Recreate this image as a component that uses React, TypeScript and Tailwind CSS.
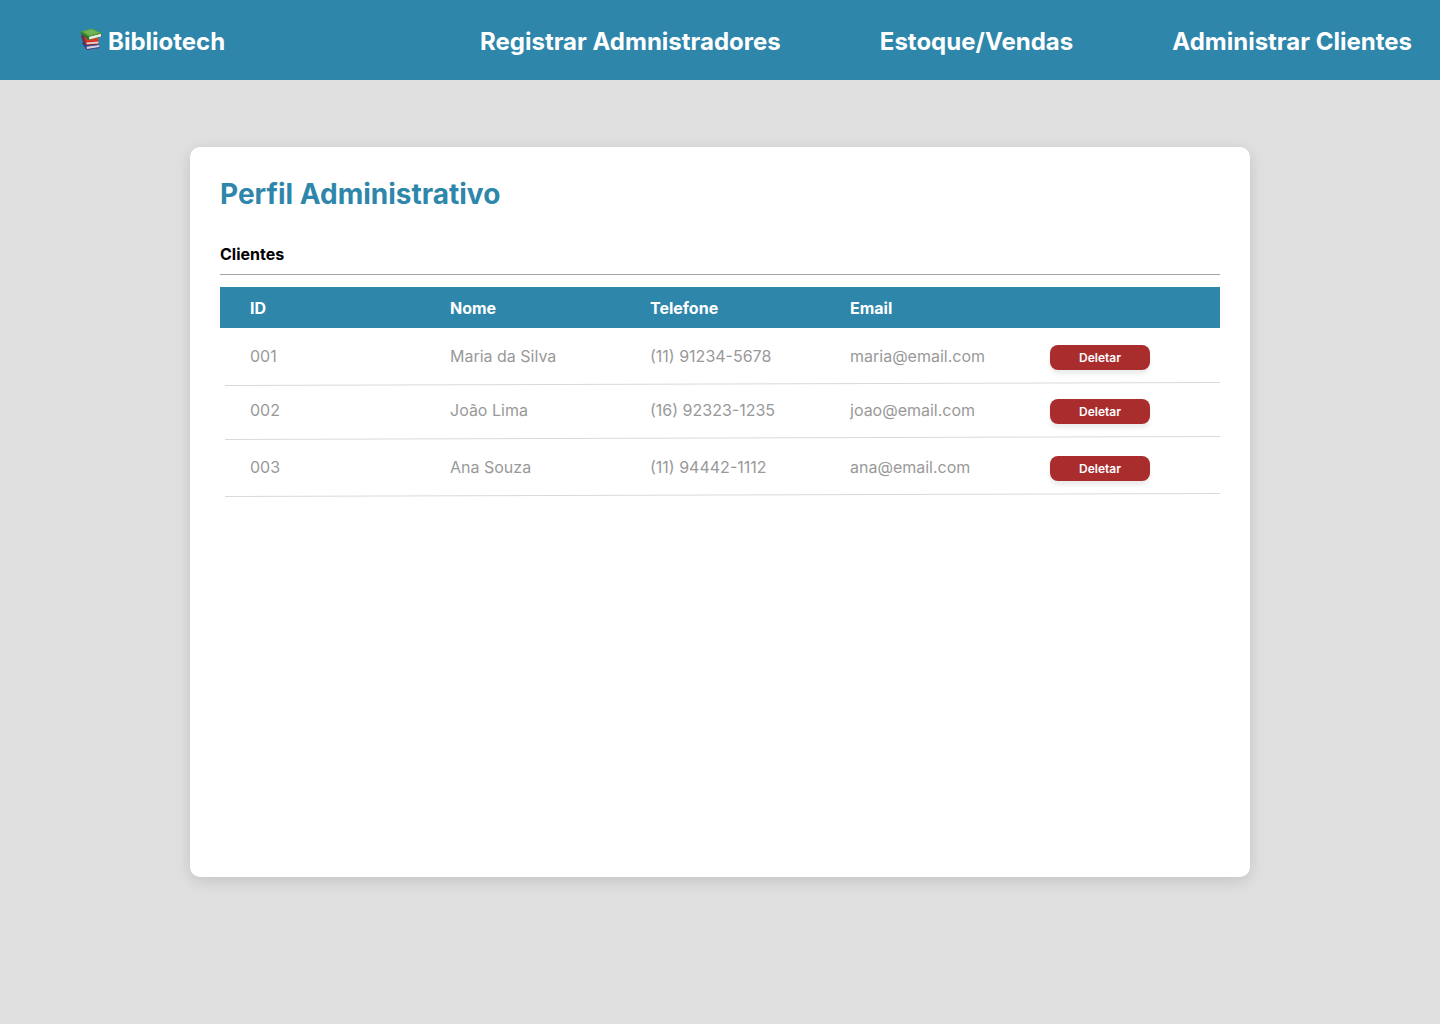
const navLinks = ['Registrar Admnistradores', 'Estoque/Vendas', 'Administrar Clientes'];

const clients = [
  { id: '001', name: 'Maria da Silva', phone: '(11) 91234-5678', email: 'maria@email.com', height: 'h-[54px]' },
  { id: '002', name: 'João Lima', phone: '(16) 92323-1235', email: 'joao@email.com', height: 'h-[50px]' },
  { id: '003', name: 'Ana Souza', phone: '(11) 94442-1112', email: 'ana@email.com', height: 'h-[53px]' },
];

function BooksIcon() {
  return (
    <svg viewBox="0 0 22 23" className="h-[23px] w-[22px]" aria-hidden="true">
      <path d="M3 13.5 2 15.5 6.5 21.8 19.5 20 19 16 9 14Z" fill="#35427f" />
      <path d="m6.6 18.2 12.6-1.4.2 2.8-12.4 1.8Z" fill="#d5d3dc" />
      <path d="m6.4 17.7 13-1.5.2.8-13 1.7Z" fill="#4a4a96" />
      <path d="m7 21 12.6-2 .1.8L7 21.9Z" fill="#3f3d86" />
      <path d="M.8 7.6 3.2 14.4 6 17.6 9 12 4 7Z" fill="#5e3550" />
      <path d="M3.4 8.4 6.2 17 18.6 16 18 10.4Z" fill="#c62a22" />
      <path d="m4.4 8.4 2.8 5.3 11-1.2V9.6Z" fill="#e23a2a" />
      <path d="m6.4 14.4 11.9-.9.2 1.9-12 .9Z" fill="#e6d3cf" />
      <path d="M.6 3.6 1 5.4l7.2 6.8 13-3.4.3-3.8Z" fill="#31702c" />
      <path d="m9 8.8 12-3v2.6L9.3 11.4Z" fill="#e8eddf" />
      <path d="M.6 3.6 11.8.6l10 4.5L9 8.8Z" fill="#57a040" />
      <path d="m3.5 3.6 8.2-2.1 7.2 3.3-9.3 2.5Z" fill="#70b552" />
    </svg>
  );
}

function RowDivider() {
  return (
    <tr aria-hidden="true">
      <td colSpan={5} className="pl-[5px]">
        <svg viewBox="0 0 995 4" preserveAspectRatio="none" className="block h-1 w-full">
          <line x1="0" y1="3.5" x2="995" y2="0.5" stroke="#d9d9d9" />
        </svg>
      </td>
    </tr>
  );
}

export default function App() {
  return (
    <div className="min-h-screen bg-[#e0e0e0] font-['Inter',sans-serif] text-base text-black">
      <header className="grid h-20 grid-cols-3 items-center bg-[#2e86ab] pt-1 text-2xl font-bold text-white">
        <a href="#" className="flex items-center gap-1.5 pl-20">
          <span className="pb-1.5">
            <BooksIcon />
          </span>
          Bibliotech
        </a>
        <nav className="col-span-2 flex justify-between pr-7 whitespace-nowrap">
          {navLinks.map((label) => (
            <a key={label} href="#">
              {label}
            </a>
          ))}
        </nav>
      </header>

      <main className="mx-auto mt-[67px] min-h-[730px] w-full max-w-[1060px] rounded-[10px] bg-white px-[30px] pt-7 shadow-[0_4px_15px_rgba(0,0,0,0.13)]">
        <h1 className="text-[28px] leading-[38px] font-bold text-[#2e86ab]">Perfil Administrativo</h1>
        <h2 className="mt-[29px] border-b border-[#a5a5a5] pb-2 leading-6 font-bold">Clientes</h2>

        <table className="mt-3 w-full table-fixed text-left">
          <thead>
            <tr className="h-[41px] bg-[#2e86ab] text-white">
              <th className="w-[23%] pl-[30px] font-bold">ID</th>
              <th className="w-[20%] font-bold">Nome</th>
              <th className="w-[20%] font-bold">Telefone</th>
              <th className="w-[20%] font-bold">Email</th>
              <th className="w-[17%]" aria-label="Ações" />
            </tr>
          </thead>
          {clients.map((client) => (
            <tbody key={client.id} className="text-[#999999]">
              <tr className={`${client.height} align-bottom`}>
                <td className="pb-3.5 pl-[30px]">{client.id}</td>
                <td className="pb-3.5">{client.name}</td>
                <td className="pb-3.5">{client.phone}</td>
                <td className="pb-3.5">{client.email}</td>
                <td className="pb-3">
                  <button
                    type="button"
                    className="block h-[25px] w-[100px] rounded-lg bg-[#a92d2d] text-xs font-semibold text-white shadow-[0_4px_4px_rgba(0,0,0,0.08)]"
                  >
                    Deletar
                  </button>
                </td>
              </tr>
              <RowDivider />
            </tbody>
          ))}
        </table>
      </main>
    </div>
  );
}
